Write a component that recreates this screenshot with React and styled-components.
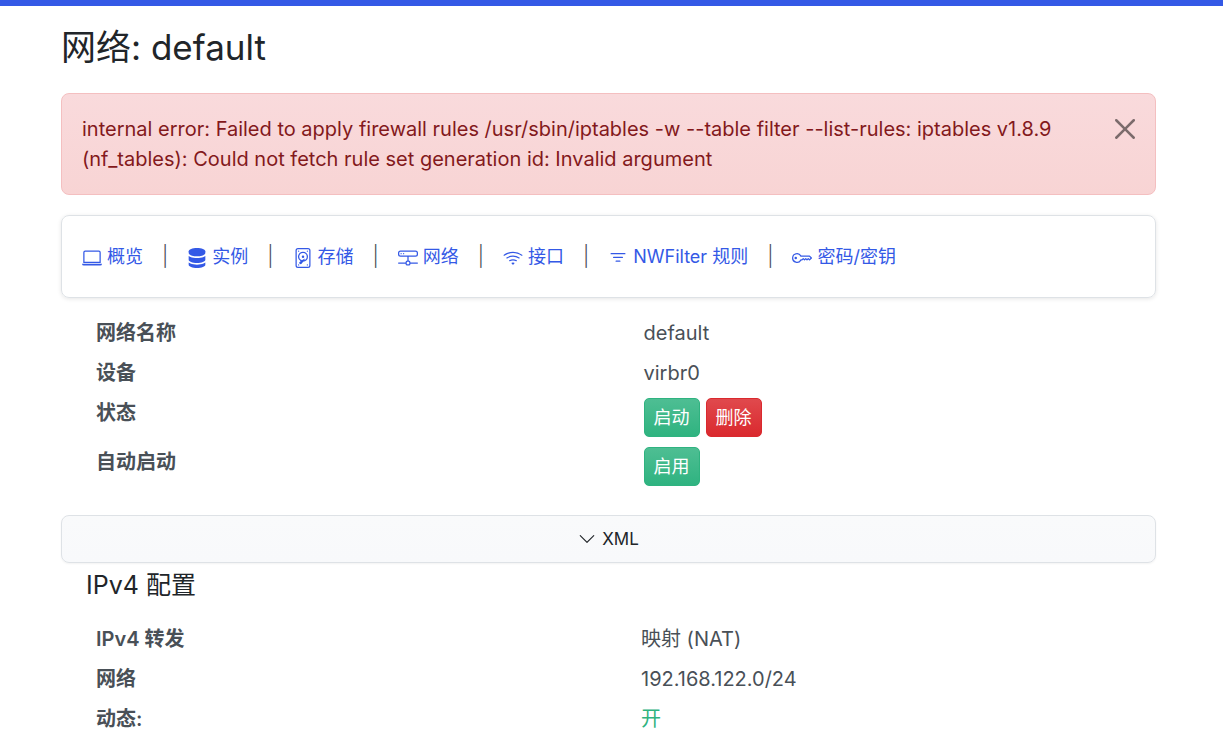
import React from 'react';
import styled, { createGlobalStyle } from 'styled-components';
import {
    BsChevronDown,
    BsDeviceHdd,
    BsFilter,
    BsHddNetwork,
    BsKey,
    BsLaptop,
    BsServer,
    BsWifi,
} from 'react-icons/bs';

const GlobalStyle = createGlobalStyle`
    *, *::before, *::after {
        box-sizing: border-box;
    }
    body {
        margin: 0;
        background: #fff;
        color: #495057;
        font-family: Inter, "Noto Sans CJK SC", sans-serif;
        font-size: 20px;
        line-height: 30px;
    }
`

const TopBar = styled.header`
    height: 6px;
    background: #3459e6;
`

const Container = styled.main`
    padding: 20px 67px 0 61px;
`

const Title = styled.h1`
    margin: 0 0 25px;
    color: #212529;
    font-size: 35px;
    font-weight: 400;
    line-height: 42px;
`

const Alert = styled.div`
    display: flex;
    align-items: flex-start;
    gap: 34px;
    margin-bottom: 20px;
    padding: 20px;
    border: 1px solid #f4bfc0;
    border-radius: 8px;
    background: linear-gradient(180deg, #f9dadc, #f8d4d4);
    color: #83191c;

    p {
        flex: 1;
        margin: 0;
    }
`

const CloseButton = styled.button`
    display: flex;
    padding: 5px 0;
    border: 0;
    background: none;
    color: #000;
    opacity: 0.5;
    cursor: pointer;
`

const NavCard = styled.nav`
    margin-bottom: 20px;
    padding: 27px 20px;
    border: 1px solid #dee2e6;
    border-radius: 8px;
    box-shadow: 0 1px 4px rgba(0, 0, 0, 0.1);
    font-size: 18px;
    line-height: 27px;

    ul {
        display: flex;
        margin: 0;
        padding: 0;
        list-style: none;
    }
    li + li::before {
        content: "|";
        margin: 0 19px;
        color: #495057;
        font-size: 20px;
        font-weight: 300;
        line-height: 1;
    }
`

const NavLink = styled.a`
    color: #3459e6;
    text-decoration: none;

    svg {
        width: 20px;
        height: 20px;
        margin-right: 5px;
        vertical-align: -5px;
    }
`

const Details = styled.dl`
    display: grid;
    grid-template-columns: 1fr 1fr;
    gap: 10px 0;
    margin: 0;

    dt {
        padding-left: 35px;
        font-weight: 600;
    }
    dd {
        margin: 0;
        padding-left: 35px;
    }
`

const Ipv4Details = styled(Details)`
    padding-right: 5px;
`

const Actions = styled.dd`
    display: flex;
    gap: 6px;
`

const Button = styled.button`
    padding: 5px 9px;
    border: 1px solid ${({ $danger }) => ($danger ? '#da292e' : '#2fb380')};
    border-radius: 5px;
    background: ${({ $danger }) =>
        $danger
            ? 'linear-gradient(180deg, #e0494d, #da292e)'
            : 'linear-gradient(180deg, #4ebe93, #2fb380)'};
    color: #fff;
    font: inherit;
    font-size: 18px;
    line-height: 27px;
    cursor: pointer;
`

const XmlToggle = styled.button`
    display: flex;
    align-items: center;
    justify-content: center;
    gap: 6px;
    width: 100%;
    margin: 29px 0 7px;
    padding: 10px;
    border: 1px solid #dee2e6;
    border-radius: 8px;
    background: linear-gradient(180deg, #f9fafb, #f8f9fb);
    box-shadow: 0 1px 2px rgba(0, 0, 0, 0.05);
    color: #212529;
    font: inherit;
    font-size: 17px;
    line-height: 26px;
    cursor: pointer;

    svg {
        width: 18px;
        height: 18px;
    }
`

const SectionTitle = styled.h2`
    margin: 0 0 24px;
    padding: 0 25px;
    color: #212529;
    font-size: 25px;
    font-weight: 400;
    line-height: 30px;
`

const On = styled.dd`
    color: #2fb380;
`

const links = [
    { icon: BsLaptop, label: '概览' },
    { icon: BsServer, label: '实例' },
    { icon: BsDeviceHdd, label: '存储' },
    { icon: BsHddNetwork, label: '网络' },
    { icon: BsWifi, label: '接口' },
    { icon: BsFilter, label: 'NWFilter 规则' },
    { icon: BsKey, label: '密码/密钥' },
];

function App(){
    return (
        <>
            <GlobalStyle/>
            <TopBar/>
            <Container lang="zh-CN">
                <Title>网络: default</Title>
                <Alert role="alert">
                    <p>
                        internal error: Failed to apply firewall rules /usr/sbin/iptables -w --table filter --list-rules: iptables v1.8.9 (nf_tables): Could not fetch rule set generation id: Invalid argument
                    </p>
                    <CloseButton type="button" aria-label="关闭">
                        <svg width="20" height="20" viewBox="0 0 16 16" fill="currentColor">
                            <path d="M.293.293a1 1 0 0 1 1.414 0L8 6.586 14.293.293a1 1 0 1 1 1.414 1.414L9.414 8l6.293 6.293a1 1 0 0 1-1.414 1.414L8 9.414l-6.293 6.293a1 1 0 0 1-1.414-1.414L6.586 8 .293 1.707a1 1 0 0 1 0-1.414z"/>
                        </svg>
                    </CloseButton>
                </Alert>
                <NavCard>
                    <ul>
                        {links.map(({ icon: Icon, label }) => (
                            <li key={label}>
                                <NavLink href="#"><Icon/>{label}</NavLink>
                            </li>
                        ))}
                    </ul>
                </NavCard>
                <Details>
                    <dt>网络名称</dt>
                    <dd>default</dd>
                    <dt>设备</dt>
                    <dd>virbr0</dd>
                    <dt>状态</dt>
                    <Actions>
                        <Button type="button">启动</Button>
                        <Button type="button" $danger>删除</Button>
                    </Actions>
                    <dt>自动启动</dt>
                    <Actions>
                        <Button type="button">启用</Button>
                    </Actions>
                </Details>
                <XmlToggle type="button">
                    <BsChevronDown/>
                    XML
                </XmlToggle>
                <SectionTitle>IPv4 配置</SectionTitle>
                <Ipv4Details>
                    <dt>IPv4 转发</dt>
                    <dd>映射 (NAT)</dd>
                    <dt>网络</dt>
                    <dd>192.168.122.0/24</dd>
                    <dt>动态:</dt>
                    <On>开</On>
                </Ipv4Details>
            </Container>
        </>
    );
};

export default App;
